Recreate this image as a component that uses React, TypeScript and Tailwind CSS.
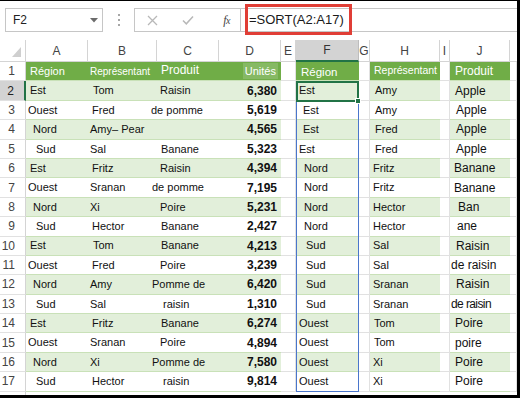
import React from "react";

type Cell = [string, string];

type Row = { a: string; b: Cell; c: Cell; d: string; f: Cell; h: Cell; j: Cell };

const REGION: Record<string, string> = {
  Est: "ml-[4px]",
  Ouest: "ml-[2px]",
  Nord: "ml-[7px]",
  Sud: "ml-[10px]",
};

const ROWS: Row[] = [
  { a: "Est", b: ["Tom", "ml-[5px]"], c: ["Raisin", "ml-[3px]"], d: "6,380", f: ["Est", "ml-[3px]"], h: ["Amy", "ml-[5px]"], j: ["Apple", "ml-[5px]"] },
  { a: "Ouest", b: ["Fred", "ml-[4px]"], c: ["de pomme", "-ml-[6px]"], d: "5,619", f: ["Est", "ml-[7px]"], h: ["Amy", "ml-[5px]"], j: ["Apple", "ml-[6px]"] },
  { a: "Nord", b: ["Amy– Pear", "ml-[2px]"], c: ["", ""], d: "4,565", f: ["Est", "ml-[7px]"], h: ["Fred", "ml-[5px]"], j: ["Apple", "ml-[6px]"] },
  { a: "Sud", b: ["Sal", "ml-[2px]"], c: ["Banane", "ml-[4px]"], d: "5,323", f: ["Est", "ml-[3px]"], h: ["Fred", "ml-[5px]"], j: ["Apple", "ml-[6px]"] },
  { a: "Est", b: ["Fritz", "ml-[4px]"], c: ["Raisin", "ml-[3px]"], d: "4,394", f: ["Nord", "ml-[8px]"], h: ["Fritz", "ml-[3px]"], j: ["Banane", "ml-[4px]"] },
  { a: "Ouest", b: ["Sranan", "ml-[2px]"], c: ["de pomme", "-ml-[5px]"], d: "7,195", f: ["Nord", "ml-[8px]"], h: ["Fritz", "ml-[3px]"], j: ["Banane", "ml-[4px]"] },
  { a: "Nord", b: ["Xi", "ml-[2px]"], c: ["Poire", "ml-[3px]"], d: "5,231", f: ["Nord", "ml-[8px]"], h: ["Hector", "ml-[3px]"], j: ["Ban", "ml-[8px]"] },
  { a: "Sud", b: ["Hector", "ml-[4px]"], c: ["Banane", "ml-[4px]"], d: "2,427", f: ["Nord", "ml-[8px]"], h: ["Hector", "ml-[3px]"], j: ["ane", "ml-[7px]"] },
  { a: "Est", b: ["Tom", "ml-[5px]"], c: ["Banane", "ml-[4px]"], d: "4,213", f: ["Sud", "ml-[10px]"], h: ["Sal", "ml-[3px]"], j: ["Raisin", "ml-[6px]"] },
  { a: "Ouest", b: ["Fred", "ml-[4px]"], c: ["Poire", "ml-[3px]"], d: "3,239", f: ["Sud", "ml-[10px]"], h: ["Sal", "ml-[3px]"], j: ["de raisin", "ml-[1px]"] },
  { a: "Nord", b: ["Amy", "ml-[2px]"], c: ["Pomme de", "-ml-[5px]"], d: "6,420", f: ["Sud", "ml-[10px]"], h: ["Sranan", "ml-[3px]"], j: ["Raisin", "ml-[6px]"] },
  { a: "Sud", b: ["Sal", "ml-[2px]"], c: ["raisin", "ml-[6px]"], d: "1,310", f: ["Sud", "ml-[10px]"], h: ["Sranan", "ml-[3px]"], j: ["de raisin", "ml-[1px] tracking-tighter"] },
  { a: "Est", b: ["Fritz", "ml-[4px]"], c: ["Banane", "ml-[4px]"], d: "6,274", f: ["Ouest", "ml-[3px]"], h: ["Tom", "ml-[4px]"], j: ["Poire", "ml-[5px]"] },
  { a: "Ouest", b: ["Sranan", "ml-[2px]"], c: ["Poire", "ml-[3px]"], d: "4,894", f: ["Ouest", "ml-[3px]"], h: ["Tom", "ml-[4px]"], j: ["poire", "ml-[5px]"] },
  { a: "Nord", b: ["Xi", "ml-[2px]"], c: ["Pomme de", "-ml-[5px]"], d: "7,580", f: ["Ouest", "ml-[3px]"], h: ["Xi", "ml-[3px]"], j: ["Poire", "ml-[5px]"] },
  { a: "Sud", b: ["Hector", "ml-[4px]"], c: ["raisin", "ml-[6px]"], d: "9,814", f: ["Ouest", "ml-[3px]"], h: ["Xi", "ml-[3px]"], j: ["Poire", "ml-[5px]"] },
];

const font = "font-['Liberation_Sans',Arial,sans-serif]";

function TCell({ w, band, children, className = "" }: { w: string; band: boolean; children?: React.ReactNode; className?: string }) {
  return (
    <div
      className={`${w} h-full flex items-center whitespace-nowrap border-b border-[#c9e1b8] text-[11px] text-[#111] ${
        band ? "bg-[#e2efda]" : "bg-white"
      } ${className}`}
    >
      {children}
    </div>
  );
}

function Gap({ w }: { w: string }) {
  return <div className={`${w} h-full border-r border-b border-[#e1e1e1] bg-white`} />;
}

function HeadCell({ w, children, className = "" }: { w: string; children?: React.ReactNode; className?: string }) {
  return (
    <div className={`${w} h-full flex items-center whitespace-nowrap bg-[#70ad47] border-b border-[#c9e1b8] text-white ${className}`}>
      {children}
    </div>
  );
}

function FormulaBar() {
  return (
    <div className="h-[39px] flex items-start pt-[7px] pl-[5px] bg-white">
      <div className="w-[98px] h-[24px] border border-[#c6c6c6] flex items-center justify-between pl-[7px] pr-[4px]">
        <span className="text-[12px] text-[#222]">F2</span>
        <svg width="8" height="5" viewBox="0 0 8 5">
          <polygon points="0,0 8,0 4,4.5" fill="#6b6b6b" />
        </svg>
      </div>
      <div className="w-[31px] h-[24px] flex flex-col items-center justify-center gap-[3px]">
        <span className="w-[2px] h-[2px] bg-[#a6a6a6]" />
        <span className="w-[2px] h-[2px] bg-[#a6a6a6]" />
        <span className="w-[2px] h-[2px] bg-[#a6a6a6]" />
      </div>
      <div className="w-[107px] h-[24px] border border-[#c6c6c6] flex items-center pl-[12px] pr-[10px]">
        <svg width="11" height="11" viewBox="0 0 11 11">
          <path d="M1 1 L10 10 M10 1 L1 10" stroke="#b8b8b8" strokeWidth="1.3" />
        </svg>
        <svg width="12" height="10" viewBox="0 0 12 10" className="ml-[24px]">
          <path d="M1 5.5 L4.3 8.8 L11 1.5" stroke="#b8b8b8" strokeWidth="1.5" fill="none" />
        </svg>
        <span className="ml-auto text-[12px] italic text-[#444] font-['Liberation_Serif',serif] tracking-[-0.5px]">
          f<span className="text-[10px]">x</span>
        </span>
      </div>
      <div className="relative flex-1 h-[24px] border-y border-[#c6c6c6]">
        <div className="absolute left-[4px] top-[-5px] w-[107px] h-[31px] border-[3px] border-[#e03e36] flex items-center pl-[1px]">
          <span className="text-[13px] text-[#1a1a1a]">=SORT(A2:A17)</span>
        </div>
      </div>
    </div>
  );
}

function ColumnHeaders() {
  const cols: [string, string, boolean][] = [
    ["A", "w-[62px]", false],
    ["B", "w-[69px]", false],
    ["C", "w-[62px]", false],
    ["D", "w-[62px]", false],
    ["E", "w-[15px]", false],
    ["F", "w-[63px]", true],
    ["G", "w-[11px]", false],
    ["H", "w-[70px]", false],
    ["I", "w-[10px]", false],
    ["J", "w-[60px]", false],
  ];
  return (
    <div className="h-[22px] flex bg-white">
      <div className="w-[26px] h-full border-r border-b border-[#d4d4d4] flex items-end justify-end pr-[4px] pb-[4px]">
        <svg width="9" height="10" viewBox="0 0 9 10">
          <polygon points="9,0 9,10 0,10" fill="#cfcfcf" />
        </svg>
      </div>
      {cols.map(([id, w, sel]) => (
        <div
          key={id}
          className={`${w} h-full flex items-center justify-center text-[12px] border-r ${
            sel
              ? "bg-[#d3d3d3] border-[#bdbdbd] border-b-2 border-b-[#217346] text-[#333]"
              : "border-[#d4d4d4] border-b border-b-[#d4d4d4] text-[#444]"
          }`}
        >
          {id}
        </div>
      ))}
      <div className="flex-1 h-full border-b border-[#d4d4d4]" />
    </div>
  );
}

function RowNum({ n, sel }: { n?: number; sel?: boolean }) {
  return (
    <div
      className={`w-[26px] h-full flex items-center justify-end pr-[10px] text-[12px] ${
        sel ? "bg-[#d3d3d3] border-r-2 border-[#217346] text-[#222]" : "bg-white border-r border-[#d4d4d4] text-[#444]"
      } border-b border-b-[#e1e1e1]`}
    >
      {n}
    </div>
  );
}

export default function App() {
  return (
    <div className={`w-[520px] h-[398px] overflow-hidden bg-white border-t border-r-[3px] border-b-[3px] border-black ${font}`}>
      <FormulaBar />
      <div className="relative">
        <ColumnHeaders />

        <div className="h-[19.4px] flex">
          <RowNum n={1} />
          <HeadCell w="w-[62px]" className="text-[11px]">
            <span className="ml-[4px]">Région</span>
          </HeadCell>
          <HeadCell w="w-[69px]" className="text-[10px]">
            <span className="ml-[2px]">Représentant</span>
          </HeadCell>
          <HeadCell w="w-[62px]" className="text-[12px]">
            <span className="ml-[4px] -mt-[2px]">Produit</span>
          </HeadCell>
          <HeadCell w="w-[62px]" className="justify-end text-[11px]">
            <span className="mr-[3px] px-[2px] bg-[#86b964]">Unités</span>
          </HeadCell>
          <Gap w="w-[15px]" />
          <HeadCell w="w-[63px]" className="text-[11.5px]">
            <span className="ml-[5px] mt-[3px]">Région</span>
          </HeadCell>
          <Gap w="w-[11px]" />
          <HeadCell w="w-[70px]" className="text-[10.5px]">
            <span className="ml-[4px]">Représentant</span>
          </HeadCell>
          <Gap w="w-[10px]" />
          <HeadCell w="w-[60px]" className="text-[12px]">
            <span className="ml-[5px] -mt-[1px]">Produit</span>
          </HeadCell>
          <Gap w="flex-1" />
        </div>

        {ROWS.map((r, i) => {
          const band = i % 2 === 0;
          return (
            <div key={i} className="h-[19.4px] flex">
              <RowNum n={i + 2} sel={i === 0} />
              <TCell w="w-[62px]" band={band}>
                <span className={REGION[r.a]}>{r.a}</span>
              </TCell>
              <TCell w="w-[69px]" band={band}>
                <span className={r.b[1]}>{r.b[0]}</span>
              </TCell>
              <TCell w="w-[62px]" band={band} className="text-[11.5px]">
                <span className={r.c[1]}>{r.c[0]}</span>
              </TCell>
              <TCell w="w-[62px]" band={band} className="justify-end font-bold text-[12px]">
                <span className="mr-[4px]">{r.d}</span>
              </TCell>
              <Gap w="w-[15px]" />
              <TCell w="w-[63px]" band={band} className="text-[11.5px]">
                <span className={r.f[1]}>{r.f[0]}</span>
              </TCell>
              <Gap w="w-[11px]" />
              <TCell w="w-[70px]" band={band} className="text-[11.5px]">
                <span className={r.h[1]}>{r.h[0]}</span>
              </TCell>
              <Gap w="w-[10px]" />
              <TCell w="w-[60px]" band={band} className="text-[12px]">
                <span className={r.j[1]}>{r.j[0]}</span>
              </TCell>
              <Gap w="flex-1" />
            </div>
          );
        })}

        <div className="h-[19.4px] flex">
          <RowNum />
          <div className="flex-1 h-full bg-white" />
        </div>

        {/* spill range + active cell */}
        <div className="absolute left-[296px] top-[41px] w-[63px] h-[311px] border border-[#4a76cc] pointer-events-none" />
        <div className="absolute left-[296px] top-[41px] w-[63px] h-[21px] border-2 border-[#217346] pointer-events-none">
          <div className="absolute -right-[4px] -bottom-[4px] w-[6px] h-[6px] bg-[#217346] border border-white" />
        </div>
      </div>
    </div>
  );
}
